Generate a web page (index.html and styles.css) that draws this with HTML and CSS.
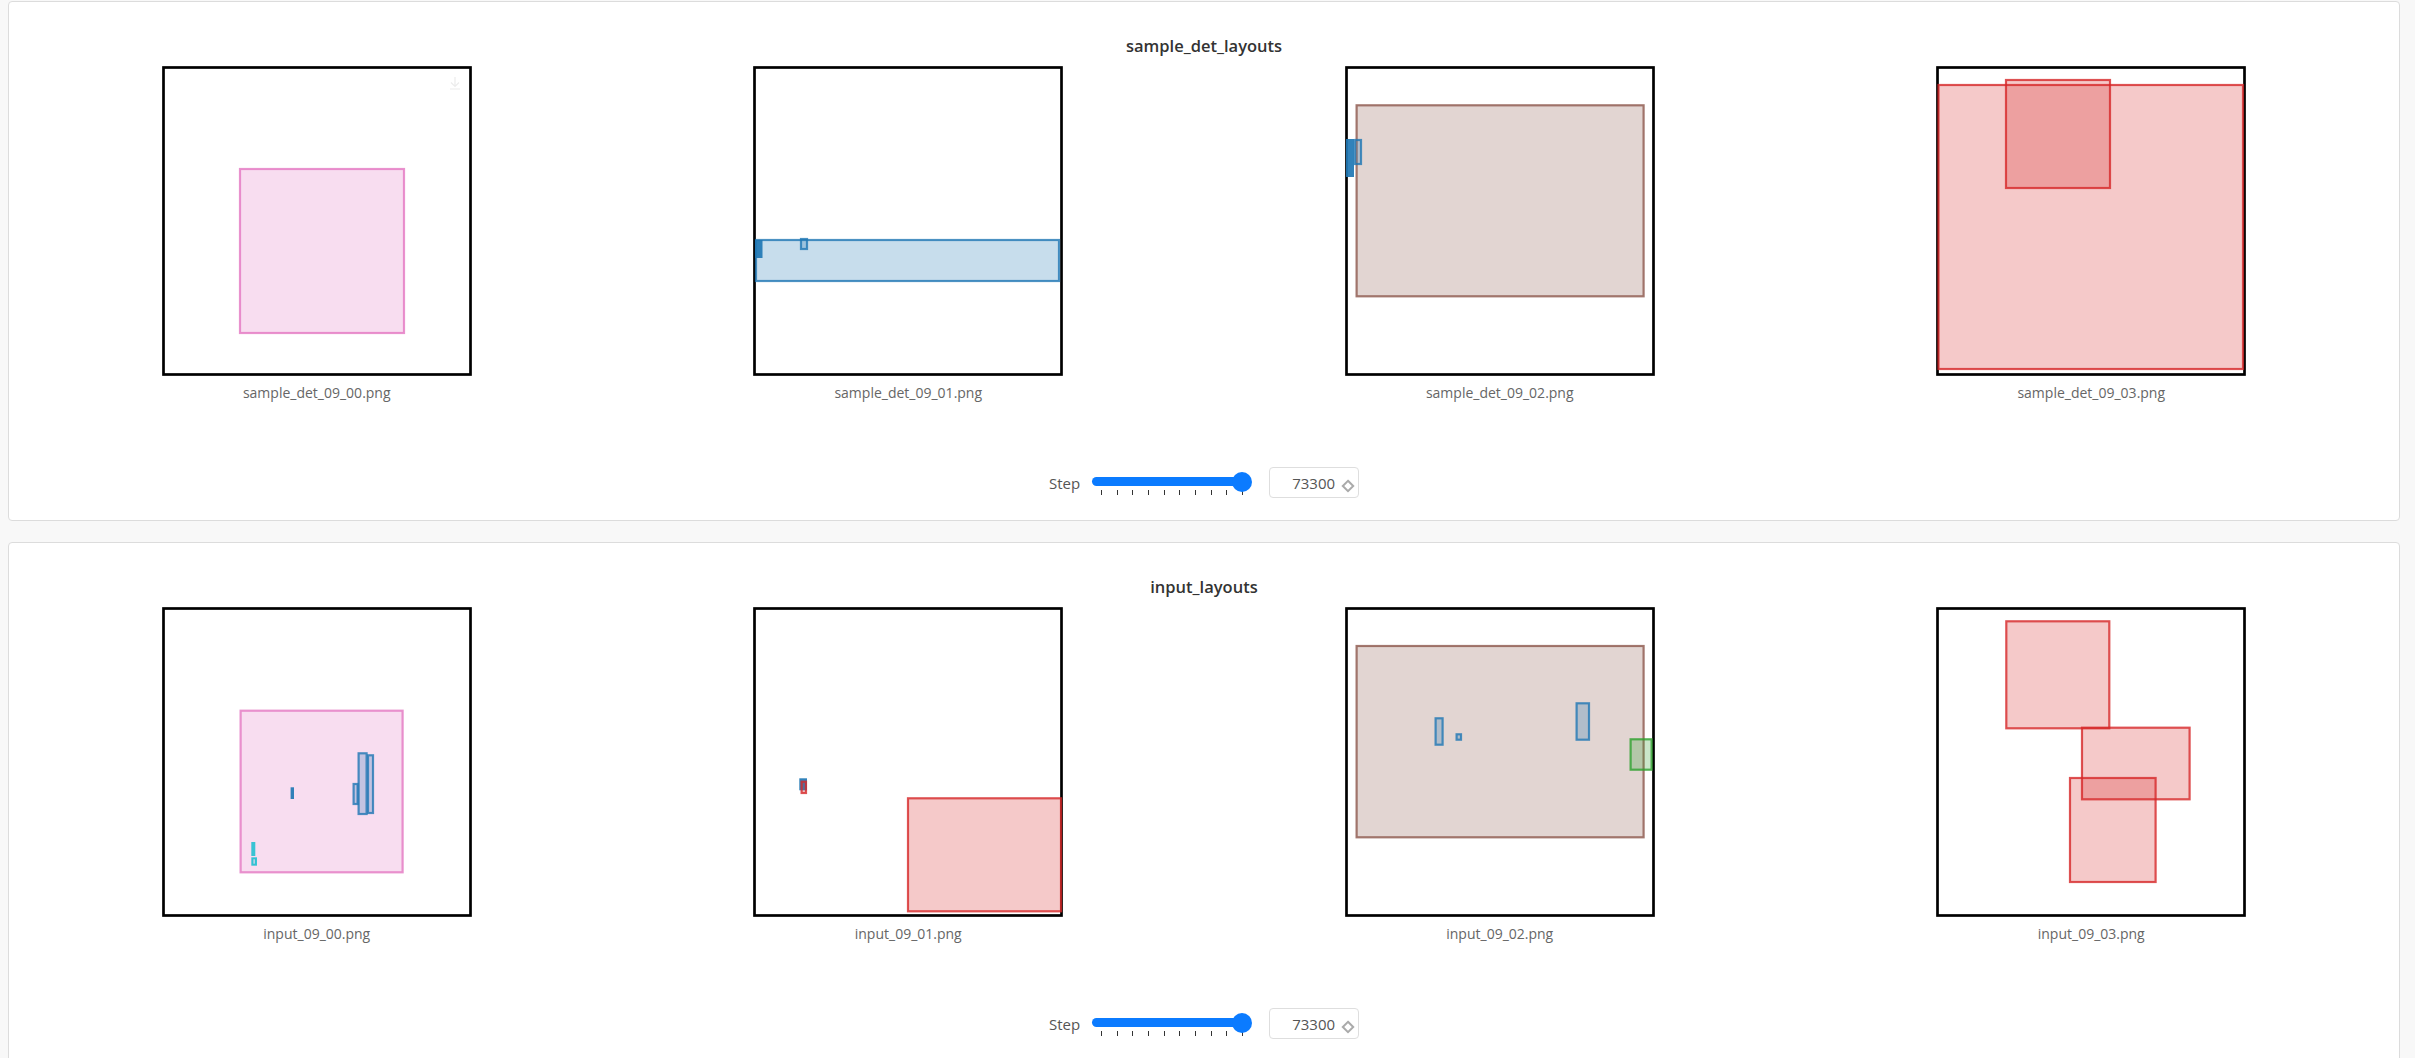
FILE: index.html
```html
<!DOCTYPE html>
<html>
<head>
<meta charset="utf-8">
<link rel="stylesheet" href="styles.css">
</head>
<body>
<div class="page">
  <section class="panel">
    <div class="panel-title">sample_det_layouts</div>
    <div class="grid">
      <figure class="cell">
        <div class="frame">
          <svg class="plot" viewBox="0 0 310 310" width="310" height="310">
            <rect class="border" x="1.5" y="1.5" width="307" height="307"/>
            <rect class="b-pink" x="78" y="103" width="164" height="164"/>
          </svg>
          <svg class="dl-icon" viewBox="0 0 14 14" width="14" height="14"><path d="M7 1v9M3 6.5l4 4 4-4M2 13h10"/></svg>
        </div>
        <figcaption class="caption">sample_det_09_00.png</figcaption>
      </figure>
      <figure class="cell">
        <div class="frame">
          <svg class="plot" viewBox="0 0 310 310" width="310" height="310">
            <rect class="border" x="1.5" y="1.5" width="307" height="307"/>
            <rect class="b-blue" x="3" y="174" width="303" height="41"/>
            <rect class="s-blue" x="2" y="174" width="7.5" height="18"/>
            <rect class="b-blue" x="48" y="173" width="6" height="10"/>
          </svg>
        </div>
        <figcaption class="caption">sample_det_09_01.png</figcaption>
      </figure>
      <figure class="cell">
        <div class="frame">
          <svg class="plot" viewBox="0 0 310 310" width="310" height="310">
            <rect class="border" x="1.5" y="1.5" width="307" height="307"/>
            <rect class="b-brown" x="11.6" y="39.3" width="287" height="191"/>
            <rect class="s-blue" x="1" y="73" width="8" height="38"/>
            <rect class="b-blue" x="10" y="74" width="6" height="24"/>
          </svg>
        </div>
        <figcaption class="caption">sample_det_09_02.png</figcaption>
      </figure>
      <figure class="cell">
        <div class="frame">
          <svg class="plot" viewBox="0 0 310 310" width="310" height="310">
            <rect class="border" x="1.5" y="1.5" width="307" height="307"/>
            <rect class="b-red" x="2.5" y="19" width="304.5" height="284"/>
            <rect class="b-red" x="70" y="14" width="104" height="108"/>
          </svg>
        </div>
        <figcaption class="caption">sample_det_09_03.png</figcaption>
      </figure>
    </div>
    <div class="step-row">
      <span class="step-label">Step</span>
      <div class="slider">
        <div class="rail"></div>
        <div class="ticks"><i></i><i></i><i></i><i></i><i></i><i></i><i></i><i></i><i></i><i></i></div>
        <div class="thumb"></div>
      </div>
      <div class="num-input">
        <span class="num-value">73300</span>
        <svg class="spinner" viewBox="0 0 14 14" width="14" height="14"><path d="M7 1.8L12.2 7 7 12.2 1.8 7z"/></svg>
      </div>
    </div>
  </section>

  <section class="panel">
    <div class="panel-title">input_layouts</div>
    <div class="grid">
      <figure class="cell">
        <div class="frame">
          <svg class="plot" viewBox="0 0 310 310" width="310" height="310">
            <rect class="border" x="1.5" y="1.5" width="307" height="307"/>
            <rect class="b-pink" x="78.6" y="103.7" width="162" height="161.6"/>
            <rect class="s-blue" x="128.6" y="180.3" width="3.4" height="11.7"/>
            <rect class="b-blue" x="196.6" y="146.3" width="8" height="60.7"/>
            <rect class="b-blue" x="206" y="148.3" width="5" height="57.7"/>
            <rect class="b-blue" x="191.6" y="177" width="4" height="20"/>
            <rect class="s-cyan" x="89.3" y="235" width="4" height="14"/>
            <rect class="b-cyan" x="90.3" y="251.3" width="3.7" height="6.4"/>
          </svg>
        </div>
        <figcaption class="caption">input_09_00.png</figcaption>
      </figure>
      <figure class="cell">
        <div class="frame">
          <svg class="plot" viewBox="0 0 310 310" width="310" height="310">
            <rect class="border" x="1.5" y="1.5" width="307" height="307"/>
            <rect class="b-red" x="155" y="191.3" width="153" height="113"/>
            <rect class="s-blue" x="46.3" y="171.3" width="7.7" height="12"/>
            <rect class="b-red" x="48.6" y="174.7" width="4.4" height="11.3"/>
          </svg>
        </div>
        <figcaption class="caption">input_09_01.png</figcaption>
      </figure>
      <figure class="cell">
        <div class="frame">
          <svg class="plot" viewBox="0 0 310 310" width="310" height="310">
            <rect class="border" x="1.5" y="1.5" width="307" height="307"/>
            <rect class="b-brown" x="11.6" y="39" width="287" height="191.3"/>
            <rect class="b-blue" x="90.6" y="111.3" width="7" height="26.4"/>
            <rect class="b-blue" x="111.6" y="127.3" width="4.4" height="5.4"/>
            <rect class="b-blue" x="231.6" y="96.3" width="12.4" height="36.4"/>
            <rect class="b-green" x="285.6" y="132.3" width="21" height="30.4"/>
          </svg>
        </div>
        <figcaption class="caption">input_09_02.png</figcaption>
      </figure>
      <figure class="cell">
        <div class="frame">
          <svg class="plot" viewBox="0 0 310 310" width="310" height="310">
            <rect class="border" x="1.5" y="1.5" width="307" height="307"/>
            <rect class="b-red" x="70.3" y="14.3" width="103" height="107"/>
            <rect class="b-red" x="146" y="120.7" width="107.6" height="71.6"/>
            <rect class="b-red" x="134" y="171" width="85.6" height="104"/>
          </svg>
        </div>
        <figcaption class="caption">input_09_03.png</figcaption>
      </figure>
    </div>
    <div class="step-row">
      <span class="step-label">Step</span>
      <div class="slider">
        <div class="rail"></div>
        <div class="ticks"><i></i><i></i><i></i><i></i><i></i><i></i><i></i><i></i><i></i><i></i></div>
        <div class="thumb"></div>
      </div>
      <div class="num-input">
        <span class="num-value">73300</span>
        <svg class="spinner" viewBox="0 0 14 14" width="14" height="14"><path d="M7 1.8L12.2 7 7 12.2 1.8 7z"/></svg>
      </div>
    </div>
  </section>
</div>
</body>
</html>
```

FILE: styles.css
```css
html, body {
  margin: 0;
  padding: 0;
  background: #f8f8f8;
  font-family: "Open Sans", "Noto Sans", sans-serif;
}

.page {
  padding: 1px 15px 0 8px;
}

.panel {
  background: #fff;
  border: 1px solid #dcdcdc;
  border-radius: 4px;
  padding: 34px 12px 22px;
  margin-bottom: 21px;
}

.panel-title {
  text-align: center;
  font-size: 16.5px;
  font-weight: 600;
  line-height: 20px;
  color: #333;
  margin-bottom: 10px;
}

.grid {
  display: grid;
  grid-template-columns: repeat(4, 1fr);
  justify-items: center;
}

.cell {
  margin: 0;
  display: flex;
  flex-direction: column;
  align-items: center;
}

.frame {
  position: relative;
  width: 310px;
  height: 310px;
}

.plot {
  display: block;
}

.plot .border {
  fill: #fff;
  stroke: #000;
  stroke-width: 2.7;
}

.b-pink { fill: rgba(227,119,194,0.25); stroke: rgba(227,119,194,0.8); stroke-width: 2.2; }
.b-blue { fill: rgba(31,119,180,0.25); stroke: rgba(31,119,180,0.8); stroke-width: 2.2; }
.s-blue { fill: rgba(31,119,180,0.92); }
.b-brown { fill: rgba(140,86,75,0.25); stroke: rgba(140,86,75,0.8); stroke-width: 2.2; }
.b-red { fill: rgba(214,39,40,0.25); stroke: rgba(214,39,40,0.8); stroke-width: 2.2; }
.b-green { fill: rgba(44,160,44,0.25); stroke: rgba(44,160,44,0.8); stroke-width: 2.2; }
.s-cyan { fill: rgba(23,190,207,0.85); }
.b-cyan { fill: rgba(23,190,207,0.3); stroke: rgba(23,190,207,0.85); stroke-width: 2; }

.dl-icon {
  position: absolute;
  top: 10px;
  right: 10px;
  fill: none;
  stroke: #ececec;
  stroke-width: 1.2;
}

.caption {
  margin-top: 8px;
  font-size: 14px;
  line-height: 18px;
  color: #666;
}

.step-row {
  margin-top: 65px;
  display: flex;
  justify-content: center;
  align-items: center;
  height: 31px;
}

.step-label {
  font-size: 15px;
  color: #555;
  margin-right: 12px;
}

.slider {
  position: relative;
  width: 160px;
  height: 31px;
  display: flex;
  flex-direction: column;
}

.rail {
  margin-top: 10px;
  width: 155px;
  height: 9px;
  border-radius: 5px;
  background: #0b7bff;
}

.ticks {
  margin-top: 4px;
  padding: 0 9px;
  height: 5px;
  display: flex;
  justify-content: space-between;
}

.ticks i {
  width: 1px;
  height: 5px;
  background: #333;
}

.thumb {
  position: absolute;
  right: 0;
  top: 5px;
  width: 20px;
  height: 20px;
  border-radius: 50%;
  background: #0b7bff;
}

.num-input {
  margin-left: 17px;
  box-sizing: border-box;
  width: 90px;
  height: 31px;
  border: 1px solid #dedede;
  border-radius: 4px;
  display: flex;
  align-items: center;
  justify-content: flex-end;
  padding-right: 3px;
}

.num-value {
  font-size: 15px;
  color: #555;
  margin-right: 6px;
}

.spinner {
  margin-top: 6px;
  fill: none;
  stroke: #aaa;
  stroke-width: 2;
}
```
